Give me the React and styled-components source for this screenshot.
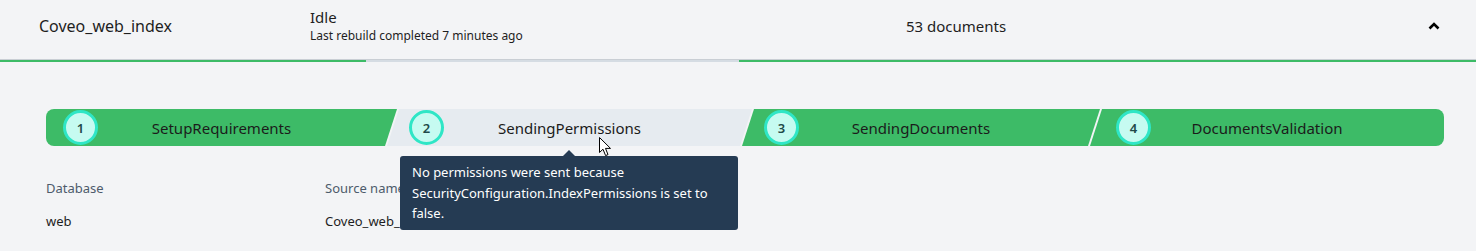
import React from 'react';
import styled, { createGlobalStyle } from 'styled-components';

const FONT = '"Noto Sans", "Open Sans", Arial, sans-serif';

const GlobalStyle = createGlobalStyle`
    html, body {
        margin: 0;
        padding: 0;
        background: #f3f4f6;
        font-family: ${FONT};
        color: #1e1e1e;
    }
`;

const Page = styled.div`
    position: relative;
    width: 1476px;
    height: 251px;
    overflow: hidden;
    background: #f3f4f6;
`;

const Header = styled.div`
    display: grid;
    grid-template-columns: 271px 596px 1fr auto;
    align-items: center;
    height: 59px;
    box-sizing: border-box;
    padding: 0 36px 8px 39px;
`;

const IndexName = styled.div`
    font-size: 16px;
`;

const Status = styled.div`
    display: flex;
    flex-direction: column;
`;

const StatusTitle = styled.span`
    font-size: 15px;
    line-height: 20px;
`;

const StatusSub = styled.span`
    font-size: 12px;
    line-height: 18px;
`;

const DocCount = styled.div`
    font-size: 15px;
`;

const Toggle = styled.button`
    border: none;
    background: none;
    padding: 0;
    display: flex;
    cursor: pointer;
`;

const Track = styled.div`
    display: flex;
    height: 2px;
    border-top: 1px solid #c9ced4;
`;

const Fill = styled.div`
    height: 100%;
    background: ${(p) => (p.$done ? '#3dbb67' : '#d5dce3')};
    width: ${(p) => (p.$width ? `${p.$width}px` : 'auto')};
    flex: ${(p) => (p.$width ? 'none' : 1)};
`;

const Body = styled.div`
    padding: 47px 32px 0 46px;
`;

const StepArea = styled.div`
    position: relative;
`;

const Stepper = styled.div`
    display: flex;
    height: 37px;
    border-radius: 8px;
    overflow: hidden;
`;

const Step = styled.div`
    flex: 0 0 ${(p) => p.$basis}px;
    box-sizing: border-box;
    display: grid;
    align-items: center;
    margin-left: ${(p) => (p.$first ? 0 : '-10px')};
    padding-left: ${(p) => p.$inset}px;
    background: ${(p) => (p.$active ? '#e6ebf0' : '#3dbb67')};
    clip-path: ${(p) =>
        p.$first
            ? 'polygon(0 0, 100% 0, calc(100% - 12px) 100%, 0 100%)'
            : p.$last
            ? 'polygon(12px 0, 100% 0, 100% 100%, 0 100%)'
            : 'polygon(12px 0, 100% 0, calc(100% - 12px) 100%, 0 100%)'};

    & > * {
        grid-area: 1 / 1;
    }
`;

const StepNumber = styled.span`
    justify-self: start;
    width: 35px;
    height: 35px;
    box-sizing: border-box;
    border-radius: 50%;
    border: 3px solid #2fe6c6;
    background: #c6fbf1;
    display: flex;
    align-items: center;
    justify-content: center;
    font-size: 13px;
    font-weight: 600;
    color: #1f4a4a;
`;

const StepLabel = styled.span`
    justify-self: center;
    font-size: 15px;
    color: #1b1b1b;
    margin-left: ${(p) => -p.$inset}px;
`;

const Tooltip = styled.div`
    position: absolute;
    top: 47px;
    left: 354px;
    width: 338px;
    box-sizing: border-box;
    padding: 6px 12px 6px;
    background: #253b53;
    color: #ffffff;
    font-size: 13px;
    line-height: 20.5px;
    border-radius: 3px;
    z-index: 2;

    &::before {
        content: '';
        position: absolute;
        top: -6px;
        left: 50%;
        transform: translateX(-50%);
        border-left: 6px solid transparent;
        border-right: 6px solid transparent;
        border-bottom: 6px solid #253b53;
    }
`;

const Details = styled.div`
    display: grid;
    grid-template-columns: 279px 1fr;
    row-gap: 15px;
    margin-top: 33px;
    font-size: 13px;
    line-height: 18px;
`;

const Label = styled.div`
    color: #4d5b6b;
`;

const Value = styled.div`
    color: #1e1e1e;
`;

const Cursor = styled.svg`
    position: absolute;
    left: 599px;
    top: 137px;
    z-index: 3;
`;

const steps = [
    { name: 'SetupRequirements', basis: 351, inset: 17 },
    { name: 'SendingPermissions', basis: 365, inset: 22 },
    { name: 'SendingDocuments', basis: 358, inset: 22 },
    { name: 'DocumentsValidation', basis: 354, inset: 26 },
];

const App = () => {
    const activeIndex = 1;

    return (
        <Page>
            <GlobalStyle />
            <Header>
                <IndexName>Coveo_web_index</IndexName>
                <Status>
                    <StatusTitle>Idle</StatusTitle>
                    <StatusSub>Last rebuild completed 7 minutes ago</StatusSub>
                </Status>
                <DocCount>53 documents</DocCount>
                <Toggle aria-label="Collapse">
                    <svg width="12" height="8" viewBox="0 0 12 8">
                        <polyline points="1.5,6.5 6,2 10.5,6.5" fill="none" stroke="#000" strokeWidth="2.6" />
                    </svg>
                </Toggle>
            </Header>
            <Track>
                <Fill $done $width={366} />
                <Fill $width={373} />
                <Fill $done />
            </Track>
            <Body>
                <StepArea>
                    <Stepper>
                        {steps.map((step, i) => (
                            <Step
                                key={step.name}
                                $basis={step.basis}
                                $inset={step.inset}
                                $first={i === 0}
                                $last={i === steps.length - 1}
                                $active={i === activeIndex}
                            >
                                <StepNumber>{i + 1}</StepNumber>
                                <StepLabel $inset={step.inset}>{step.name}</StepLabel>
                            </Step>
                        ))}
                    </Stepper>
                    <Tooltip>
                        No permissions were sent because
                        <br />
                        SecurityConfiguration.IndexPermissions is set to
                        <br />
                        false.
                    </Tooltip>
                </StepArea>
                <Details>
                    <Label>Database</Label>
                    <Label>Source name</Label>
                    <Value>web</Value>
                    <Value>Coveo_web_index</Value>
                </Details>
            </Body>
            <Cursor width="13" height="20" viewBox="0 0 13 20">
                <path d="M0.5 0.5 L0.5 15.5 L4 12.2 L6.6 18.6 L9 17.6 L6.5 11.4 L11.5 11.4 Z" fill="#fff" stroke="#000" strokeWidth="1" strokeLinejoin="round" />
            </Cursor>
        </Page>
    );
};

export default App;
